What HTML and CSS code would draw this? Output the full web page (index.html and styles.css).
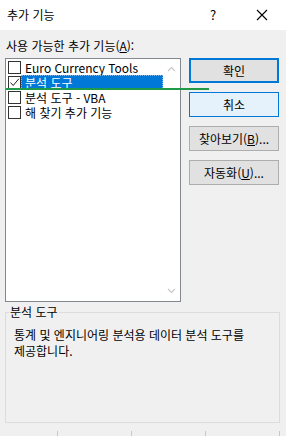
FILE: index.html
```html
<!DOCTYPE html>
<html lang="ko">
<head>
<meta charset="utf-8">
<title>추가 기능</title>
<link rel="stylesheet" href="styles.css">
</head>
<body>
<div class="dialog">
  <div class="titlebar">
    <span class="title">추가 기능</span>
    <span class="help">?</span>
    <span class="close">
      <svg width="12" height="12" viewBox="0 0 12 12"><path d="M1 1 L11 11 M11 1 L1 11" stroke="#000" stroke-width="1.1" fill="none"/></svg>
    </span>
  </div>
  <div class="content">
    <div class="label">사용 가능한 추가 기능(<u>A</u>):</div>
    <div class="main">
      <div class="listbox">
        <div class="items">
          <div class="item"><span class="cb"></span><span class="text">Euro Currency Tools</span></div>
          <div class="item selected"><span class="cb checked"><svg width="11" height="11" viewBox="0 0 11 11"><path d="M1.5 5.5 L4.2 8.5 L9.8 1.8" stroke="#222" stroke-width="1" fill="none"/></svg></span><span class="text">분석 도구</span></div>
          <div class="item"><span class="cb"></span><span class="text">분석 도구 - VBA</span></div>
          <div class="item"><span class="cb"></span><span class="text">해 찾기 추가 기능</span></div>
        </div>
        <div class="scrollbar">
          <svg width="9" height="6" viewBox="0 0 9 6"><path d="M1 5 L4.5 1.5 L8 5" stroke="#c8c8c8" stroke-width="1.2" fill="none"/></svg>
          <svg width="9" height="6" viewBox="0 0 9 6"><path d="M1 1 L4.5 4.5 L8 1" stroke="#c8c8c8" stroke-width="1.2" fill="none"/></svg>
        </div>
      </div>
      <div class="buttons">
        <button class="btn default">확인</button>
        <button class="btn hover">취소</button>
        <button class="btn">찾아보기(<u>B</u>)...</button>
        <button class="btn">자동화(<u>U</u>)...</button>
      </div>
    </div>
    <fieldset class="group">
      <legend>분석 도구</legend>
      <p class="desc">통계 및 엔지니어링 분석용 데이터 분석 도구를<br>제공합니다.</p>
    </fieldset>
    <div class="ticks"><span></span><span></span><span></span><span></span></div>
  </div>
  <div class="marker"></div>
</div>
</body>
</html>
```
FILE: styles.css
```css
html, body {
  margin: 0;
  padding: 0;
}
body {
  background: #f0f0f0;
  font-family: "Noto Sans CJK KR", "Noto Sans", sans-serif;
  font-size: 12px;
  color: #000;
}
.dialog {
  position: relative;
  width: 286px;
  height: 436px;
  overflow: hidden;
}
.titlebar {
  height: 30px;
  background: #fff;
  display: flex;
  align-items: center;
  padding-left: 7px;
  line-height: 14px;
}
.title {
  flex: 1;
}
.help {
  width: 10px;
  font-size: 13px;
  margin-right: 36px;
}
.close {
  display: flex;
  margin-right: 18px;
}
.content {
  padding: 9px 0 0 5px;
}
.label {
  line-height: 14px;
  height: 14px;
  padding-left: 1px;
}
.label u, .btn u {
  text-underline-offset: 1px;
}
.main {
  display: flex;
  margin-top: 5px;
}
.listbox {
  width: 174px;
  height: 242px;
  border: 1px solid #828790;
  background: #fff;
  display: flex;
}
.items {
  flex: 1;
  padding-top: 1px;
}
.item {
  height: 15px;
  display: flex;
  align-items: center;
}
.cb {
  width: 11px;
  height: 11px;
  border: 1px solid #333;
  background: #fff;
  margin-left: 2px;
  display: flex;
  align-items: center;
  justify-content: center;
}
.text {
  flex: 1;
  height: 15px;
  line-height: 15px;
  padding-left: 4px;
  white-space: nowrap;
  overflow: hidden;
}
.selected .text {
  background: #0078d7;
  color: #fff;
  outline: 1px dotted #7fb8e8;
  outline-offset: -1px;
}
.scrollbar {
  width: 17px;
  display: flex;
  flex-direction: column;
  justify-content: space-between;
  align-items: center;
  padding: 7px 0 7px;
}
.buttons {
  display: flex;
  flex-direction: column;
  gap: 9px;
  margin-left: 8px;
}
.btn {
  width: 90px;
  height: 25px;
  font-family: inherit;
  font-size: 12px;
  color: #000;
  background: #e1e1e1;
  border: 1px solid #adadad;
  padding: 0;
  line-height: 14px;
}
.btn.default {
  border: 2px solid #0078d7;
}
.btn.hover {
  background: #e5f1fb;
  border-color: #0078d7;
}
.group {
  margin: 3px 0 0;
  padding: 0 8px;
  border: 1px solid #dcdcdc;
  box-sizing: border-box;
  width: 275px;
  height: 118px;
}
.group legend {
  padding: 0 1px;
  margin-left: -5px;
  line-height: 14px;
}
.desc {
  margin: 8px 0 0;
  line-height: 16px;
}
.ticks {
  display: flex;
  margin-top: 8px;
  height: 6px;
}
.ticks span {
  width: 73px;
  border-right: 1px solid #c8c8c8;
}
.ticks span:first-child {
  width: 52px;
}
.marker {
  position: absolute;
  left: 6px;
  top: 88px;
  width: 203px;
  height: 2px;
  background: #1f9a48;
}
```
